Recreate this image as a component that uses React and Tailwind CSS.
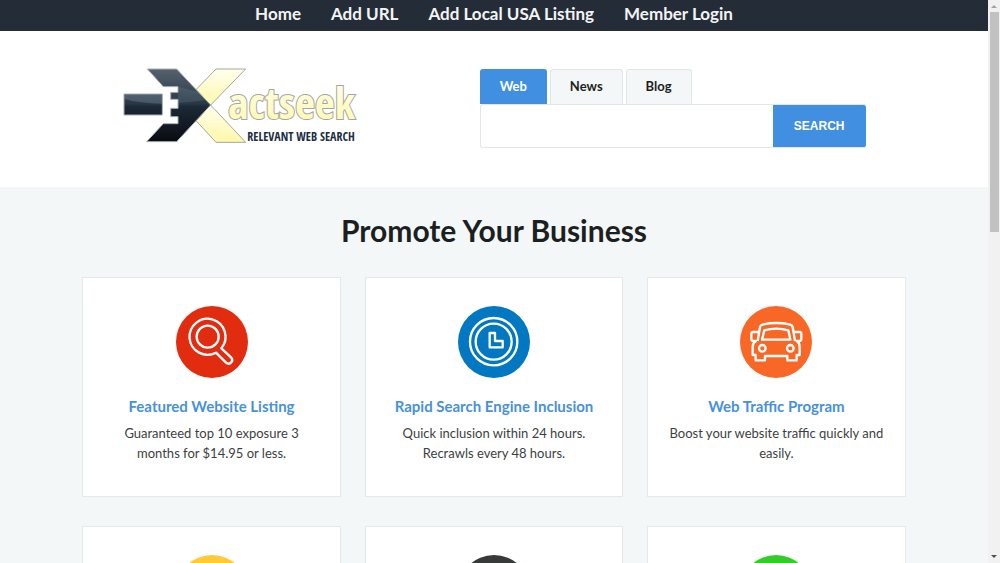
import { useState } from 'react'
import clsx from 'clsx'

const NAV_LINKS = ['Home', 'Add URL', 'Add Local USA Listing', 'Member Login']
const TABS = ['Web', 'News', 'Blog']

const CARDS = [
  {
    color: 'text-[#e12c10]',
    Icon: MagnifierIcon,
    title: 'Featured Website Listing',
    text: 'Guaranteed top 10 exposure 3 months for $14.95 or less.',
  },
  {
    color: 'text-[#0277c2]',
    Icon: ClockIcon,
    title: 'Rapid Search Engine Inclusion',
    text: 'Quick inclusion within 24 hours. Recrawls every 48 hours.',
  },
  {
    color: 'text-[#f96727]',
    Icon: CarIcon,
    title: 'Web Traffic Program',
    text: 'Boost your website traffic quickly and easily.',
  },
  { color: 'text-[#ffc937]' },
  { color: 'text-[#383a39]' },
  { color: 'text-[#33cc29]' },
]

function MagnifierIcon() {
  return (
    <>
      <path d="M136 127 A54 54 0 1 0 120 140 L150 170 A11 11 0 0 0 166 155 Z" />
      <circle cx="95" cy="92" r="33" />
    </>
  )
}

function ClockIcon() {
  return (
    <>
      <circle cx="107" cy="107" r="71" />
      <circle cx="107" cy="107" r="54" />
      <path d="M95 81 H111 V105 H134 V124 H95 Z" />
    </>
  )
}

function CarIcon() {
  return (
    <>
      <path d="M53 105 L60 63 Q62 56 70 55 Q109 47 148 55 Q156 56 158 63 L165 105" />
      <path d="M57 78 H40 Q34 78 34 84 V99 Q34 105 40 105 H48 Q38 111 38 122 V147 H47 V163 H75 V150 H142 V163 H170 V147 H179 V122 Q179 111 170 105 H178 Q184 105 184 99 V84 Q184 78 178 78 H161" />
      <path d="M66 101 L73 73 Q109 63 145 73 L151 101 Z" />
      <circle cx="67" cy="127" r="10" />
      <circle cx="151" cy="127" r="10" />
    </>
  )
}

function Logo() {
  return (
    <svg viewBox="6 9 708 234" className="w-[236px]" role="img" aria-label="Exactseek">
      <defs>
        <linearGradient id="steel" x1="0" y1="15" x2="0" y2="231" gradientUnits="userSpaceOnUse">
          <stop offset="0" stopColor="#55626e" />
          <stop offset="0.48" stopColor="#2a3846" />
          <stop offset="0.52" stopColor="#1c2936" />
          <stop offset="1" stopColor="#0a0d12" />
        </linearGradient>
        <linearGradient id="cream" x1="0" y1="0" x2="0" y2="1">
          <stop offset="0" stopColor="#fffff0" />
          <stop offset="1" stopColor="#fff8a8" />
        </linearGradient>
      </defs>
      <g fill="url(#cream)" stroke="#a5a5a0" strokeWidth="3" strokeLinejoin="round">
        <path d="M288 15 H377 L272 123 L228 77 Z" />
        <path d="M228 170 L272 123 L377 235 H288 Z" />
      </g>
      <g fill="url(#steel)" stroke="#aab0b6" strokeWidth="3" strokeLinejoin="round">
        <path d="M12 90 H127 V153 H12 Z" />
        <path d="M82 15 H170 L272 123 L170 233 H80 L130 179 H174 V158 H152 V133 H174 V106 H152 V85 H174 V68 H130 Z" />
      </g>
      <path d="M13 91 H126 V119 Q60 118 13 105 Z" fill="#8494a3" fillOpacity="0.35" />
      <path d="M174 117 Q220 114 258 108 L234 83 L174 68 Z" fill="#8494a3" fillOpacity="0.2" />
      <text
        x="325"
        y="165"
        fontSize="130"
        fill="url(#cream)"
        stroke="#a5a5a0"
        strokeWidth="6"
        paintOrder="stroke"
        className="font-['Open_Sans_Condensed','Open_Sans',sans-serif] font-bold"
      >
        actseek
      </text>
      <text
        x="382"
        y="231"
        fontSize="36"
        fill="#1c2d3f"
        className="font-['Open_Sans_Condensed','Open_Sans',sans-serif] font-bold"
      >
        RELEVANT WEB SEARCH
      </text>
    </svg>
  )
}

function SearchBox() {
  const [tab, setTab] = useState('Web')

  return (
    <form className="w-[386px] pt-0.5" onSubmit={(e) => e.preventDefault()}>
      <div className="flex gap-[3px]">
        {TABS.map((name) => (
          <button
            key={name}
            type="button"
            onClick={() => setTab(name)}
            className={clsx(
              'h-[35px] rounded-t-[3px] border border-b-0 px-[19px] text-[13px] font-bold',
              tab === name
                ? 'border-[#418fe0] bg-[#418fe0] text-white'
                : 'border-[#e2e6e6] bg-[#f3f7f7] text-[#1c1f1f]',
            )}
          >
            {name}
          </button>
        ))}
      </div>
      <div className="flex h-11">
        <input
          type="text"
          aria-label="Search"
          className="min-w-0 flex-1 rounded-l-[3px] border border-r-0 border-[#e2e6e6] bg-white px-3 text-sm outline-none"
        />
        <button
          type="submit"
          className="w-[93px] rounded-r-[3px] border-y border-[#e2e6e6] bg-[#418fe0] font-['Liberation_Sans',sans-serif] text-xs font-bold text-white"
        >
          SEARCH
        </button>
      </div>
    </form>
  )
}

function PromoCard({ color, Icon, title, text }) {
  return (
    <article className="flex min-h-[220px] flex-col items-center border border-[#e4eaea] bg-white px-5 pt-7 text-center">
      <svg
        viewBox="0 0 216 216"
        className={clsx('size-[72px]', color)}
        fill="none"
        stroke="#ffffff"
        strokeWidth="7"
        strokeLinejoin="round"
        aria-hidden="true"
      >
        <circle cx="108" cy="108" r="108" fill="currentColor" stroke="none" />
        {Icon && <Icon />}
      </svg>
      {title && (
        <>
          <h3 className="mt-[18px] text-[15px] leading-5 font-bold">
            <a href="#" className="text-[#4791dc]">
              {title}
            </a>
          </h3>
          <p className="mt-[7px] text-[13px] leading-5 text-[#3c3f3f]">{text}</p>
        </>
      )}
    </article>
  )
}

// Classic light scrollbar
function Scrollbar() {
  return (
    <div className="flex w-3 shrink-0 flex-col items-center bg-[#f1f1f1]" aria-hidden="true">
      <svg viewBox="0 0 12 12" className="h-3 w-3" fill="#a3a3a3">
        <path d="M3 8 L6 5 L9 8 Z" />
      </svg>
      <div className="h-[39%] w-[9px] bg-[#c1c1c1]" />
      <svg viewBox="0 0 12 12" className="mt-auto h-3 w-3" fill="#505050">
        <path d="M3 4 L6 7 L9 4 Z" />
      </svg>
    </div>
  )
}

export default function App() {
  return (
    <div className="flex h-screen overflow-hidden font-['Lato','Open_Sans',sans-serif]">
      <div className="min-w-0 flex-1 overflow-hidden bg-[#f3f7f7]">
        <nav className="flex h-[31px] items-start justify-center gap-[30px] bg-[#242d37] pt-0.5">
          {NAV_LINKS.map((link) => (
            <a key={link} href="#" className="text-[17px] leading-6 font-bold text-[#f3f4f5]">
              {link}
            </a>
          ))}
        </nav>

        <header className="bg-white">
          <div className="mx-auto flex w-5/6 items-start justify-between px-10 pt-9 pb-[39px]">
            <Logo />
            <SearchBox />
          </div>
        </header>

        <main className="mx-auto w-5/6 pt-[23px]">
          <h1 className="text-center text-[30px] leading-10 font-bold text-[#1c1f1f]">
            Promote Your Business
          </h1>
          <div className="mt-[27px] grid grid-cols-3 gap-x-6 gap-y-[29px]">
            {CARDS.map((card, i) => (
              <PromoCard key={i} {...card} />
            ))}
          </div>
        </main>
      </div>
      <Scrollbar />
    </div>
  )
}
